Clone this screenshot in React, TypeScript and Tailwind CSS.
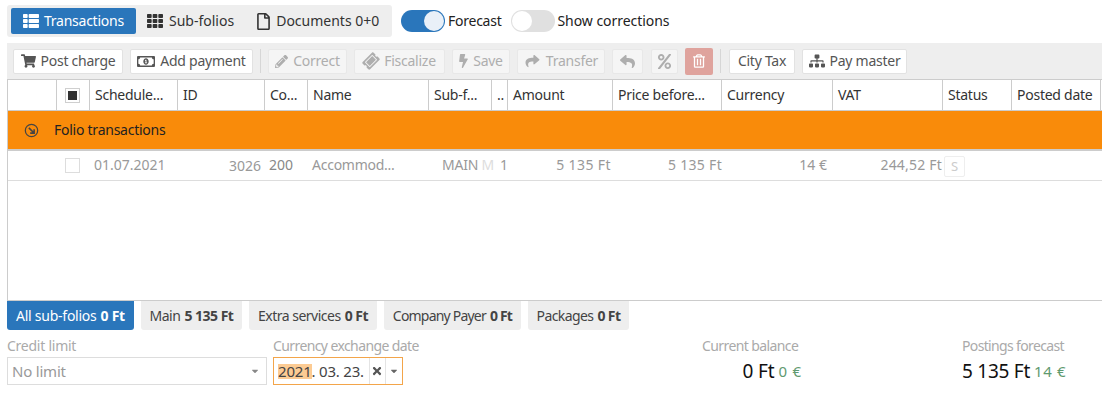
import type { ReactNode } from 'react'
import {
  FaThList, FaTh, FaRegFile, FaShoppingCart, FaRegMoneyBillAlt, FaPencilAlt, FaTicketAlt,
  FaBolt, FaShare, FaReply, FaPercent, FaRegTrashAlt, FaSitemap, FaTimes, FaCaretDown,
} from 'react-icons/fa'

const COLUMNS = [
  { label: '', w: 'w-[49px]' },
  { label: '', w: 'w-[33px]', check: true },
  { label: 'Schedule...', w: 'w-[88px]' },
  { label: 'ID', w: 'w-[87px]' },
  { label: 'Co...', w: 'w-[43px]' },
  { label: 'Name', w: 'w-[121px]' },
  { label: 'Sub-f...', w: 'w-[63px]' },
  { label: '..', w: 'w-[16px]' },
  { label: 'Amount', w: 'w-[105px]' },
  { label: 'Price before...', w: 'w-[109px]' },
  { label: 'Currency', w: 'w-[111px]' },
  { label: 'VAT', w: 'w-[110px]' },
  { label: 'Status', w: 'w-[69px]' },
  { label: 'Posted date', w: 'w-[89px]' },
]

function ToolButton({ w, disabled, children }: { w: string; disabled?: boolean; children: ReactNode }) {
  return (
    <div className={`${w} h-[25px] shrink-0 rounded-[2px] border flex items-center justify-center gap-[5px] ${disabled ? 'bg-[#f5f5f5] border-[#e8e8e8] text-[#aeaeae]' : 'bg-white border-[#e2e2e2] text-[#555]'}`}>
      {children}
    </div>
  )
}

function Switch({ on }: { on?: boolean }) {
  return (
    <div className={`w-[44px] h-[22px] rounded-full flex items-center shrink-0 ${on ? 'bg-[#2a76bb] justify-end pr-[1px]' : 'bg-[#e0e0e0] justify-start pl-[1px]'}`}>
      <div className={`w-[20px] h-[20px] rounded-full ${on ? 'bg-[#e9f0f8]' : 'bg-white'}`} />
    </div>
  )
}

function SubTab({ name, amount, size, active }: { name: string; amount: string; size: string; active?: boolean }) {
  return (
    <div className={`${size} h-[29px] shrink-0 flex items-center justify-center rounded-b-[3px] gap-[4px] whitespace-nowrap ${active ? 'bg-[#2a76bb] text-white' : 'bg-[#eeeeee] text-[#444]'}`}>
      <span>{name}</span>
      <b className="font-bold">{amount}</b>
    </div>
  )
}

export default function App() {
  return (
    <div className="w-[1102px] h-[406px] bg-white overflow-hidden text-[14px] leading-none text-[#333] tracking-[-0.25px]" style={{ fontFamily: '"Noto Sans", sans-serif' }}>
      {/* Top tabs + switches */}
      <div className="flex items-center h-[43px] pl-[7px] pb-[1px]">
        <div className="w-[385px] h-[32px] bg-[#eeeeee] rounded-[3px] flex items-center pl-[4px] text-[#444]">
          <div className="w-[125px] h-[26px] bg-[#2a76bb] text-white rounded-[2px] flex items-center pl-[11px] gap-[4px]">
            <FaThList className="w-[18px] h-[16px]" />
            <span>Transactions</span>
          </div>
          <div className="flex items-center pl-[10px] gap-[5px] text-[#333] tracking-normal">
            <FaTh className="w-[18px] h-[16px]" />
            <span>Sub-folios</span>
          </div>
          <div className="flex items-center pl-[22px] gap-[5px] text-[#333] tracking-normal">
            <FaRegFile className="w-[15px] h-[17px]" />
            <span>Documents 0+0</span>
          </div>
        </div>
        <div className="ml-[9px] flex items-center gap-[3px] text-[#222]">
          <Switch on />
          <span>Forecast</span>
        </div>
        <div className="ml-[10px] flex items-center gap-[2px] text-[#222] tracking-[-0.05px]">
          <Switch />
          <span>Show corrections</span>
        </div>
      </div>

      {/* Toolbar */}
      <div className="ml-[7px] h-[36px] bg-[#eeeeee] flex items-center pl-[6px] gap-[7px]">
        <ToolButton w="w-[110px]"><FaShoppingCart className="w-[15px] h-[14px]" />Post charge</ToolButton>
        <ToolButton w="w-[123px]"><FaRegMoneyBillAlt className="w-[18px] h-[15px]" />Add payment</ToolButton>
        <div className="w-[1px] h-[24px] bg-[#d6d6d6]" />
        <ToolButton w="w-[79px]" disabled><FaPencilAlt className="w-[13px] h-[13px]" />Correct</ToolButton>
        <ToolButton w="w-[91px]" disabled><FaTicketAlt className="w-[16px] h-[14px] -rotate-45" />Fiscalize</ToolButton>
        <ToolButton w="w-[58px]" disabled><FaBolt className="w-[9px] h-[14px]" />Save</ToolButton>
        <ToolButton w="w-[88px]" disabled><FaShare className="w-[17px] h-[14px]" />Transfer</ToolButton>
        <ToolButton w="w-[31px]" disabled><FaReply className="w-[17px] h-[15px]" /></ToolButton>
        <div className="ml-[1px]">
          <ToolButton w="w-[27px]" disabled><FaPercent className="w-[15px] h-[15px]" /></ToolButton>
        </div>
        <div className="w-[28px] h-[27px] shrink-0 rounded-[2px] bg-[#dfa39d] text-white flex items-center justify-center">
          <FaRegTrashAlt className="w-[12px] h-[14px]" />
        </div>
        <div className="w-[1px] h-[24px] bg-[#d6d6d6]" />
        <div className="ml-[1px]">
          <ToolButton w="w-[66px]">City Tax</ToolButton>
        </div>
        <ToolButton w="w-[105px]"><FaSitemap className="w-[16px] h-[14px]" />Pay master</ToolButton>
      </div>

      {/* Grid */}
      <div className="ml-[7px] h-[222px] border-l border-b border-[#cccccc] flex flex-col">
        <div className="h-[32px] border-t border-b border-[#cccccc] flex shrink-0">
          {COLUMNS.map((c, i) => (
            <div key={i} className={`${c.w} shrink-0 h-full border-r border-[#cccccc] flex items-center ${c.check ? 'justify-center pr-[1px]' : 'pl-[5px]'} overflow-hidden whitespace-nowrap text-[#333]`}>
              {c.check && (
                <div className="w-[15px] h-[15px] border border-[#cfcfcf] flex items-center justify-center">
                  <div className="w-[9px] h-[9px] bg-[#333]" />
                </div>
              )}
              {c.label}
            </div>
          ))}
        </div>
        <div className="h-[40px] bg-[#f98b0a] border-b-2 border-b-[#cccccc] flex items-center pl-[16px] text-[#222] shrink-0">
          <svg viewBox="0 0 16 16" className="w-[15px] h-[15px]" fill="none" stroke="#444" strokeWidth="1.3">
            <circle cx="8" cy="8" r="6.6" />
            <path d="M5.2 5.2 10.4 10.4M10.8 6.6V10.8H6.6" strokeWidth="1.7" />
          </svg>
          <span className="ml-[15px]">Folio transactions</span>
        </div>
        <div className="h-[30px] border-b border-[#dddddd] flex items-center text-[#999] shrink-0 tracking-normal pb-[1px]">
          <div className="w-[82px] pl-[57px] shrink-0">
            <div className="w-[15px] h-[15px] border border-[#dddddd]" />
          </div>
          <span className="w-[88px] pl-[4px] shrink-0">01.07.2021</span>
          <span className="w-[87px] pr-[4px] shrink-0 text-right pt-[2px]">3026</span>
          <span className="w-[43px] pl-[4px] shrink-0 text-[#888]">200</span>
          <span className="w-[121px] pl-[4px] shrink-0 tracking-[-0.25px]">Accommod...</span>
          <span className="w-[63px] pl-[13px] shrink-0 whitespace-nowrap tracking-[-0.25px]">MAIN <span className="text-[#ddd]">M</span></span>
          <span className="w-[16px] pl-[8px] shrink-0">1</span>
          <span className="w-[105px] pr-[2px] shrink-0 text-right tracking-[0.4px]">5 135 Ft</span>
          <span className="w-[109px] shrink-0 text-right tracking-[0.3px]">5 135 Ft</span>
          <span className="w-[105px] shrink-0 text-right">14 €</span>
          <span className="w-[115px] shrink-0 text-right tracking-[0.2px]">244,52 Ft</span>
          <div className="ml-[2px] w-[21px] h-[21px] border border-[#eeeeee] rounded-[2px] text-[#ccc] flex items-center justify-center text-[13px] mt-[3px]">S</div>
        </div>
      </div>

      {/* Sub-folio tabs */}
      <div className="ml-[7px] flex gap-[7px]">
        <SubTab size="w-[127px] tracking-[-0.25px]" name="All sub-folios" amount="0 Ft" active />
        <SubTab size="w-[101px] tracking-[-0.5px]" name="Main" amount="5 135 Ft" />
        <SubTab size="w-[128px] tracking-[-0.5px]" name="Extra services" amount="0 Ft" />
        <SubTab size="w-[137px] tracking-[-0.8px]" name="Company Payer" amount="0 Ft" />
        <SubTab size="w-[101px] tracking-[-0.6px]" name="Packages" amount="0 Ft" />
      </div>

      {/* Bottom fields */}
      <div className="flex mt-[9px] pl-[7px]">
        <div className="w-[260px] shrink-0">
          <div className="h-[16px] text-[#aaa]">Credit limit</div>
          <div className="mt-[2px] h-[28px] border border-[#dddddd] flex items-center pl-[4px] pr-[6px] justify-between text-[#999] text-[15px] tracking-[-0.2px]">
            <span>No limit</span>
            <FaCaretDown className="w-[10px] h-[10px] text-[#888]" />
          </div>
        </div>
        <div className="w-[130px] ml-[6px] shrink-0">
          <div className="h-[16px] text-[#aaa] whitespace-nowrap tracking-[-0.6px]">Currency exchange date</div>
          <div className="mt-[2px] h-[28px] border border-[#f3a54a] flex items-center text-[#444] text-[15px] tracking-[-0.2px] whitespace-nowrap">
            <span className="ml-[4px] bg-[#fccb93]">2021</span>
            <span className="w-[58px]">. 03. 23.</span>
            <div className="w-[17px] h-full border-l border-[#e4e4e4] flex items-center justify-center">
              <FaTimes className="w-[12px] h-[12px] text-[#555]" />
            </div>
            <div className="w-[17px] h-full border-l border-[#e4e4e4] flex items-center justify-center">
              <FaCaretDown className="w-[10px] h-[10px] text-[#666]" />
            </div>
          </div>
        </div>
        <div className="ml-[295px] w-[104px] shrink-0">
          <div className="h-[16px] pl-[4px] text-[#aaa] whitespace-nowrap tracking-[-0.6px]">Current balance</div>
          <div className="mt-[2px] h-[28px] flex items-center justify-end gap-[4px]">
            <span className="text-[19px] text-[#111] tracking-[-0.1px]">0 Ft</span>
            <span className="text-[#5f9a6f] text-[15px] tracking-[0.8px]">0 €</span>
          </div>
        </div>
        <div className="ml-[160px] w-[110px] shrink-0">
          <div className="h-[16px] text-[#aaa] whitespace-nowrap tracking-[-0.65px]">Postings forecast</div>
          <div className="mt-[2px] h-[28px] flex items-center gap-[4px] whitespace-nowrap">
            <span className="text-[19px] text-[#111]">5 135 Ft</span>
            <span className="text-[#5f9a6f] text-[15px] tracking-[0.6px]">14 €</span>
          </div>
        </div>
      </div>
    </div>
  )
}
